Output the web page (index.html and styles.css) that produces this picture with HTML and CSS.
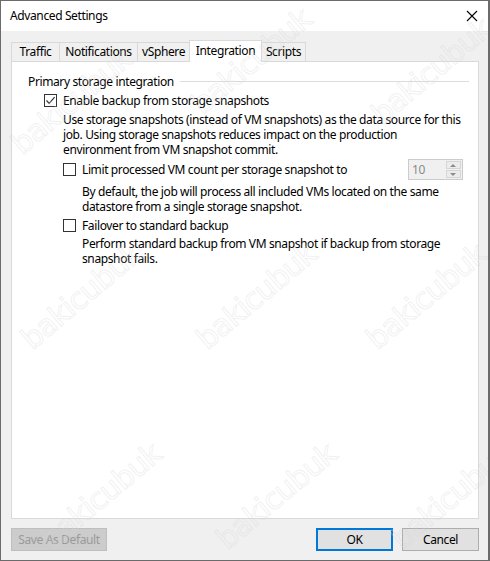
FILE: index.html
```html
<!doctype html>
<html>

<head>
	<meta charset="utf-8">
	<title>Advanced Settings</title>
	<link rel="stylesheet" href="styles.css">
</head>

<body>
	<div class="window">
		<div class="titlebar">
			<span class="title">Advanced Settings</span>
			<svg class="close" width="12" height="12" viewBox="0 0 12 12"><path d="M1 1L11 11M11 1L1 11" stroke="#000" stroke-width="1.1" fill="none"/></svg>
		</div>
		<div class="content">
			<ul class="tabs">
				<li class="tab w-traffic">Traffic</li>
				<li class="tab w-notif">Notifications</li>
				<li class="tab w-vsphere">vSphere</li>
				<li class="tab active w-integ">Integration</li>
				<li class="tab w-scripts">Scripts</li>
			</ul>
			<div class="panel">
				<div class="group-head">
					<span>Primary storage integration</span>
					<i class="rule"></i>
				</div>
				<div class="option lvl1">
					<span class="check checked">
						<svg width="11" height="11" viewBox="0 0 11 11"><path d="M1.5 5.5L4.2 8.3L9.6 2.2" stroke="#333" stroke-width="1.2" fill="none"/></svg>
					</span>
					<span>Enable backup from storage snapshots</span>
				</div>
				<p class="desc lvl1-desc">Use storage snapshots (instead of VM snapshots) as the data source for this<br>job. Using storage snapshots reduces impact on the production<br>environment from VM snapshot commit.</p>
				<div class="option lvl2 with-spin">
					<span class="check"></span>
					<span class="grow">Limit processed VM count per storage snapshot to</span>
					<div class="spin">
						<span class="spin-val">10</span>
						<div class="spin-btns">
							<span class="arrow up"></span>
							<span class="arrow down"></span>
						</div>
					</div>
				</div>
				<p class="desc lvl2-desc">By default, the job will process all included VMs located on the same<br>datastore from a single storage snapshot.</p>
				<div class="option lvl2 gap-top">
					<span class="check"></span>
					<span>Failover to standard backup</span>
				</div>
				<p class="desc lvl2-desc tight">Perform standard backup from VM snapshot if backup from storage<br>snapshot fails.</p>
			</div>
			<div class="buttons">
				<button class="btn disabled wide">Save As Default</button>
				<span class="grow"></span>
				<button class="btn default">OK</button>
				<button class="btn">Cancel</button>
			</div>
		</div>
		<div class="marks">
			<span class="mark m1">bakicubuk</span>
			<span class="mark m2">bakicubuk</span>
			<span class="mark m3">bakicubuk</span>
			<span class="mark m4">bakicubuk</span>
			<span class="mark m5">bakicubuk</span>
			<span class="mark m6">bakicubuk</span>
			<span class="mark m7">bakicubuk</span>
			<span class="mark m8">bakicubuk</span>
			<span class="mark m9">bakicubuk</span>
		</div>
	</div>
</body>

</html>
```

FILE: styles.css
```css
* {
	margin: 0;
	padding: 0;
	list-style: none;
	box-sizing: border-box;
}

body {
	font-family: "Noto Sans", "DejaVu Sans", sans-serif;
	font-size: 12px;
	letter-spacing: -0.38px;
	color: #000;
	background: #f0f0f0;
}

.window {
	width: 490px;
	height: 561px;
	border: 1px solid #6b6b6b;
	border-right-width: 2px;
	position: relative;
	overflow: hidden;
	display: flex;
	flex-direction: column;
	background: #f0f0f0;
}

.titlebar {
	height: 30px;
	background: #fff;
	display: flex;
	align-items: center;
	padding: 0 10px 0 9px;
}

.title {
	flex: 1;
	font-size: 12px;
	padding-bottom: 1px;
}

.close {
	margin-top: -1px;
}

.content {
	flex: 1;
	padding: 9px 9px 0 10px;
	display: flex;
	flex-direction: column;
}

.tabs {
	display: flex;
	align-items: flex-end;
	height: 21px;
	position: relative;
	z-index: 1;
}

.tab {
	height: 19px;
	border: 1px solid #d9d9d9;
	border-bottom: none;
	margin-right: -1px;
	text-align: center;
	line-height: 18px;
	background: #f0f0f0;
	color: #000;
}

.tab.active {
	height: 22px;
	background: #fff;
	margin-bottom: -1px;
	line-height: 19px;
	position: relative;
}

.w-traffic { width: 49px; }
.w-notif { width: 79px; }
.w-vsphere { width: 53px; }
.w-integ { width: 73px; }
.w-scripts { width: 45px; }

.panel {
	height: 458px;
	background: #fff;
	border: 1px solid #d9d9d9;
	padding: 11px 9px 0 16px;
	white-space: nowrap;
}

.group-head {
	display: flex;
	align-items: center;
	height: 16px;
}

.group-head .rule {
	flex: 1;
	height: 1px;
	background: #dcdcdc;
	margin-left: 6px;
}

.option {
	display: flex;
	align-items: center;
	height: 16px;
}

.lvl1 {
	margin-top: 3px;
	padding-left: 16px;
}

.lvl2 {
	padding-left: 35px;
}

.check {
	width: 13px;
	height: 13px;
	border: 1px solid #333;
	background: #fff;
	margin-right: 6px;
	flex: none;
	display: flex;
	align-items: center;
	justify-content: center;
}

.desc {
	line-height: 15px;
}

.lvl1-desc {
	padding-left: 35px;
	margin-top: 4px;
}

.lvl2-desc {
	padding-left: 54px;
	margin-top: 4px;
}

.lvl2-desc.tight {
	margin-top: 3px;
}

.with-spin {
	height: 21px;
	margin-top: 2px;
	padding-right: 6px;
}

.gap-top {
	margin-top: 3px;
}

.grow {
	flex: 1;
}

.spin {
	width: 55px;
	height: 21px;
	border: 1px solid #cccccc;
	background: #f0f0f0;
	display: flex;
	align-items: center;
	padding: 1px 1px 1px 3px;
}

.spin-val {
	flex: 1;
	color: #8a8a8a;
	font-size: 12px;
}

.spin-btns {
	width: 15px;
	height: 17px;
	display: flex;
	flex-direction: column;
	gap: 1px;
}

.arrow {
	flex: 1;
	background: #ececec;
	border: 1px solid #d6d6d6;
	position: relative;
}

.arrow::after {
	content: "";
	position: absolute;
	left: 3px;
	border-left: 3px solid transparent;
	border-right: 3px solid transparent;
}

.arrow.up::after {
	top: 2px;
	border-bottom: 3px solid #8c8c8c;
}

.arrow.down::after {
	top: 2px;
	border-top: 3px solid #8c8c8c;
}

.buttons {
	display: flex;
	align-items: center;
	margin-top: 9px;
	gap: 9px;
}

.btn {
	font-family: inherit;
	font-size: 12px;
	letter-spacing: inherit;
	height: 23px;
	width: 77px;
	background: #e1e1e1;
	border: 1px solid #adadad;
	color: #000;
}

.btn.wide {
	width: 96px;
}

.btn.disabled {
	background: #cccccc;
	border-color: #bfbfbf;
	color: #9a9a9a;
}

.btn.default {
	border: 2px solid #0078d7;
}

.marks {
	position: absolute;
	inset: 0;
	pointer-events: none;
	z-index: 5;
}

.mark {
	position: absolute;
	width: 170px;
	text-align: center;
	font-family: "DejaVu Sans", sans-serif;
	font-size: 30px;
	letter-spacing: -1px;
	color: transparent;
	-webkit-text-stroke: 1px rgba(215, 215, 215, 0.35);
	transform: translate(-50%, -50%) rotate(-40deg);
}

.m1 { left: 70px; top: 100px; }
.m2 { left: 250px; top: 60px; }
.m3 { left: 430px; top: 70px; }
.m4 { left: 80px; top: 295px; }
.m5 { left: 255px; top: 295px; }
.m6 { left: 425px; top: 295px; }
.m7 { left: 100px; top: 495px; }
.m8 { left: 275px; top: 495px; }
.m9 { left: 450px; top: 495px; }
```
